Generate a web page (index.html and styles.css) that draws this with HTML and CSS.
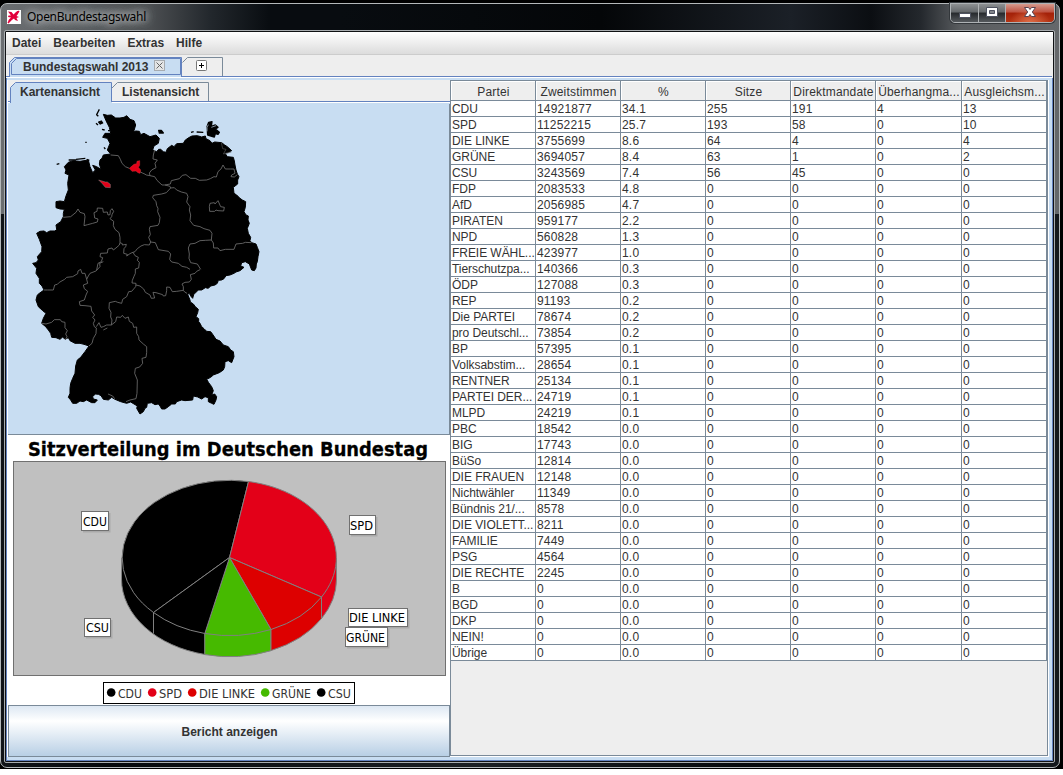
FILE: index.html
```html
<!DOCTYPE html>
<html lang="de">
<head>
<meta charset="utf-8">
<title>OpenBundestagswahl</title>
<link rel="stylesheet" href="styles.css">
</head>
<body>
<div class="desktop">
<div class="window">
  <header class="titlebar">
    <svg class="app-icon" width="14" height="14" viewBox="0 0 14 14"><rect width="14" height="14" fill="#fff"/><path d="M1 1.500l3.500.5 2 2.500 2.500-2.500 1.500-1 1.500 0-1 3-1.500 2 2.500 1-2.500 1 1.500 3-3-1-1-1.500-2.500 1.500-2 2-1.500-.5 1-2 2-2-3-.5.500-1.500 2.500 0z" fill="#e2003c"/><path d="M1 13L12 1" stroke="#e2003c" stroke-width="1.500"/></svg>
    <span class="title">OpenBundestagswahl</span>
    <div class="controls">
      <span class="ctl min"><svg width="14" height="14" viewBox="0 0 14 14"><rect x="1.500" y="7.500" width="11" height="4" fill="#fff" stroke="#4e5260"/></svg></span>
      <span class="ctl max"><svg width="14" height="14" viewBox="0 0 14 14"><path d="M1.500 1.500h11v9h-11z" fill="#fff" stroke="#4e5260"/><path d="M4.500 4.500h5v3h-5z" fill="#82858b" stroke="#4e5260"/></svg></span>
      <span class="ctl close"><svg width="14" height="14" viewBox="0 0 14 14"><path d="M1.500 1.500h4l1.500 2 1.500-2h4l-3.200 4.500 3.200 4.500h-4l-1.500-2-1.500 2h-4l3.200-4.500z" fill="#fff" stroke="#57434f"/></svg></span>
    </div>
  </header>
  <main class="client">
    <nav class="menubar"><span>Datei</span><span>Bearbeiten</span><span>Extras</span><span>Hilfe</span></nav>
    <div class="doc-tabs">
      <svg class="tab-shapes" width="1046" height="23"><path d="M3.500 22V7.500l5-5h167V22z" fill="#c8ddf2" stroke="#6382bf"/><path d="M5.500 19.500V8.500l5-5H174.500v16z" fill="none" stroke="#6382bf"/><path d="M176.500 7.500l5-5H216.500V21" fill="none" stroke="#7a8a99"/><path d="M0 21.500h3M175 21.500h871" stroke="#6382bf"/><path d="M4 21.500h171" stroke="#c8ddf2"/><path d="M0 22.500h1046" stroke="#fff"/></svg>
      <span class="doc-label">Bundestagswahl 2013</span>
      <svg class="tab-close" width="11" height="11"><rect x=".5" y=".5" width="10" height="10" fill="#e4e5e6" stroke="#a6abb0"/><path d="M2.500 2.500l6 6m0-6l-6 6" stroke="#666"/></svg>
      <svg class="tab-add" width="11" height="11"><rect x=".5" y=".5" width="10" height="10" rx="1" fill="#fff" stroke="#777"/><path d="M3 5.500h5M5.500 3v5" stroke="#000"/></svg>
    </div>
    <div class="content">
      <section class="left">
        <div class="view-tabs">
          <svg class="view-shapes" width="442" height="25"><path d="M2.500 24V8.500l5-5H103.500V24z" fill="#c8ddf2" stroke="#6382bf"/><path d="M103.500 9.500l6-6H200.500V22" fill="none" stroke="#7a8a99"/><path d="M0 22.500h2M104 22.500h338" stroke="#6382bf"/><path d="M0 23.500h2M104 23.500h338" stroke="#fff"/><path d="M3 23.500h101M0 24.500h442" stroke="#c8ddf2"/></svg>
          <span class="v1">Kartenansicht</span><span class="v2">Listenansicht</span>
        </div>
        <div class="map">
          <svg width="441" height="331" viewBox="8 103 441 331">
            <g transform="translate(20 100) scale(.33333)" stroke-linejoin="round">
              <path d="M250 43L262 46 274 45 287 54 300 54 312 52 320 47 330 58 342 62 347 75 342 92 335 96 348 93 358 94 362 104 372 100 390 110 408 105 418 115 415 130 402 138 398 150 410 155 416 148 422 148 430 155 438 157 442 146 455 136 462 140 470 131 490 130 496 120 508 112 516 108 532 107 545 111 556 108 558 116 570 122 576 130 584 126 605 128 614 135 622 140 635 152 622 158 614 158 622 170 640 172 643 183 645 195 648 210 652 222 657 230 653 240 653 252 640 262 642 280 650 285 660 295 667 300 677 305 676 322 672 335 678 345 685 348 684 360 688 370 682 385 685 400 692 412 690 422 695 428 708 432 712 442 717 455 714 470 712 485 709 492 708 504 703 512 695 510 688 492 676 485 665 488 662 498 672 502 660 512 648 516 642 520 630 525 618 527 612 536 605 540 595 541 592 550 585 555 572 558 565 565 556 563 545 570 535 570 525 580 521 584 518 595 512 588 508 580 503 583 510 600 511 606 520 612 526 620 535 628 533 638 528 650 536 656 536 665 540 670 545 680 552 686 560 694 572 695 578 703 588 718 600 723 610 735 625 740 632 750 640 755 642 770 635 788 625 782 615 785 614 800 610 810 598 818 580 825 572 832 560 838 566 848 575 860 580 872 575 885 584 882 590 890 588 900 582 913 575 910 565 905 565 893 555 890 545 897 533 891 520 888 518 900 495 902 485 900 470 905 466 912 455 912 445 920 435 927 425 927 420 918 415 912 405 914 395 908 382 910 380 922 375 925 370 935 360 942 350 925 352 918 342 912 332 906 320 910 302 905 285 898 275 892 265 900 250 898 243 887 235 883 226 882 218 890 220 897 232 900 225 908 215 908 200 900 190 905 180 903 170 910 158 910 152 900 145 892 150 880 150 865 152 850 158 835 165 820 167 798 172 780 182 772 195 755 207 738 192 733 180 730 165 730 150 722 145 713 135 718 128 711 120 718 108 713 95 712 92 700 85 690 77 680 65 670 70 655 78 640 68 632 55 620 48 600 52 585 58 580 72 570 66 558 58 550 58 535 48 520 50 505 38 490 48 488 55 480 52 470 65 455 66 440 58 418 50 400 60 394 72 393 80 398 90 393 105 393 110 388 108 375 122 365 130 350 130 340 133 328 120 327 108 323 108 305 120 303 133 305 138 288 145 270 143 250 147 225 135 220 138 210 133 200 145 187 160 182 180 184 205 180 210 200 218 218 226 210 218 196 230 200 243 208 238 192 240 180 246 175 250 165 272 162 262 150 270 130 262 115 248 112 255 100 272 100 268 82 258 62Z" stroke="#000" stroke-width="3"/>
              <g stroke="#000" stroke-width="4"><path d="M238 28l-4 8-4 8 5 5M228 70l6 5M198 125v4M146 180l22 0M168 178l28-3M110 193l8-2M252 142l4 5M200 178l8 3M246 88l8 2" fill="none"/><path d="M236 66l8-3 4 6-7 3zM264 92h6M416 91l8 0 6 8-12 0zM513 97l8-2M530 96l20 1"/><path d="M561 80l5-13 10-2-2 14 12-4 8 7-8 5 12 10-4 6-8-2-3 10-20-6z"/></g>
              <path d="M604 128l4 18 10 2-8 14 24-6" fill="none" stroke="#555" stroke-width="2"/>
              <path d="M561 94V82l4-8M574 82l14-5" fill="none" stroke="#c8ddf2" stroke-width="2"/>
              <g fill="none" stroke="#707070" stroke-width="2.500">
                <path d="M272 165L295 167 301 178 306 190 316 200 328 205M358 214L367 219 372 221 379 225 390 227 404 230 411 241 426 255 435 255 450 259M390 227L388 219 395 210 408 203 405 190 412 180 399 177 400 165 404 150"/>
                <path d="M435 255L451 252 454 242 478 236 487 226 498 224 512 235 526 235 538 241 560 240 571 236 582 230 589 231 594 215 603 207 609 195 616 207 631 207 642 207 645 220 635 225 633 230 643 231 652 224"/>
                <path d="M450 259L452 264 439 278 425 282 400 286 398 293 408 305 410 317 414 325 413 335 420 352 418 368 414 376 390 380 388 388 391 404 386 412 392 426 406 428 415 449 445 454 452 462 449 478 455 486 475 490 486 499 500 502 510 508"/>
                <path d="M452 264L463 263 470 270 484 276 500 280 504 290 500 306 510 320 508 330 512 345 510 362 521 376 540 380 552 386 570 391 576 400 574 420 556 421 540 422 525 430 510 432 505 444 508 462 507 475 512 488 532 492 542 508"/>
                <path d="M574 420L580 429 581 444 594 444 600 452 616 448 642 448 648 432 668 430 676 427 694 428M568 320L570 310 583 308 585 312 594 302 602 320 613 322 611 333 594 332 588 330 584 334 569 334Z"/>
                <path d="M130 352L152 350 168 337 174 327 180 337 193 341 195 350 192 377 203 374 218 370 232 366 234 357 224 354 222 338 231 334 232 324 248 325 250 337 262 336 264 345 270 344 271 332 276 326 281 334 276 344 275 350 270 356 281 364 280 377 285 388 297 398 300 412 300 428"/>
                <path d="M300 428L298 435 288 444 280 450 276 444 264 447 262 459 242 460 240 470 248 473 244 485 234 490 230 510M300 428L307 431 307 435 319 433 317 440 312 446 311 460 322 463 320 468 330 461 336 458 345 455 352 446 363 438 373 434 388 435 392 426M339 457L345 467 355 472 352 481 358 487 356 504 346 507 346 520 342 529 337 541 336 549 348 550 347 560 335 574 326 575 320 590 308 598 305 610 293 607 286 604 268 608 267 625 273 637 272 651 276 660 274 675"/>
                <path d="M250 485L239 490 240 500 228 513 210 520 205 528 200 538 203 550 190 555 193 566 203 574 198 585 193 600 178 605 180 616 195 617 213 619 215 633 224 645 218 652 225 660 220 670 223 680 229 684 228 701 220 715 216 730 207 738"/>
                <path d="M200 538L195 520 186 520 182 508 174 513 173 521 158 530 140 532 134 538 118 547 112 553 104 555 100 570 83 570 72 570M66 670L78 672 95 667 103 659 121 659 125 665 135 667 135 683 142 692 137 702 141 710 137 718"/>
                <path d="M229 680L237 668 243 682 250 680 260 675 274 675 287 665 290 651 302 652 307 646 315 655 325 651 328 664 338 670 341 682 350 681 350 700 356 710 357 720 370 732 380 740 380 758 378 772 366 775 368 790 359 801 346 805 344 820 352 840 351 880 348 896 330 900 318 905M348 555L360 558 371 567 376 577 390 585 394 595 404 594 399 577 408 578 428 584 430 588 437 587 440 572 440 561 450 562 457 575 470 574 490 571 494 576 501 580"/>
                <path d="M490 571L490 560 486 552 495 547 508 546 514 538 511 524 525 520 530 514 540 509M250 690L262 684M264 882L278 888 284 896"/>
              </g>
              <path d="M328 205l14-12 8-2 1-7 8-2 0 14-4 6 7 8-2 10-6-2-6-5-12 1z" fill="#e30018" stroke="#c33" stroke-width="1.500"/>
              <path d="M236 240l10 3 10 3 6 0 9 7 0 10-15-1-10-12z" fill="#e30018" stroke="#888" stroke-width="1.500"/>
            </g>
          </svg>
        </div>
        <div class="chart">
          <svg width="442" height="270" viewBox="8 435 442 270">
            <text class="chart-title" x="28" y="456" textLength="400" lengthAdjust="spacingAndGlyphs">Sitzverteilung im Deutschen Bundestag</text>
            <rect x="13.500" y="461.500" width="432" height="214" fill="#c0c0c0" stroke="#707070"/>
            <g stroke="#808080" stroke-linejoin="round">
              <path d="M121.500 558v21A107.500 77.500 0 0 0 205 654.500V633.500z" fill="#000"/>
              <path d="M204.800 633.500v21.100A107.500 77.500 0 0 0 271 650.700v-21.100z" fill="#46ba00"/>
              <path d="M271 629.500v21.100A107.500 77.500 0 0 0 321.500 618.500v-21.500z" fill="#dd0000"/>
              <path d="M321.500 597v21.500A107.500 77.500 0 0 0 336.500 579v-21z" fill="#e30018"/>
              <path d="M229.500 557.500L153.500 612.500A107.500 77.500 0 0 1 248.500 481.500z" fill="#000"/>
              <path d="M229.500 557.500L248.500 481.500A107.500 77.500 0 0 1 321.500 597z" fill="#e30018"/>
              <path d="M229.500 557.500L321.500 597A107.500 77.500 0 0 1 271 629.500z" fill="#dd0000"/>
              <path d="M229.500 557.500L271 629.500A107.500 77.500 0 0 1 204.800 633.500z" fill="#46ba00"/>
              <path d="M229.500 557.500L204.800 633.500A107.500 77.500 0 0 1 153.500 612.500z" fill="#000"/>
              <path d="M153.500 612.500v21" fill="none"/>
            </g>
            <g fill="#a9a9a9"><rect x="83" y="513" width="27.500" height="19.500"/><rect x="86" y="620" width="26.500" height="18.500"/><rect x="351" y="517" width="26.500" height="19.500"/><rect x="350" y="610" width="59.500" height="18.500"/><rect x="347" y="629" width="42.500" height="19.500"/></g>
            <g fill="#fff" stroke="#707070"><rect x="81.500" y="511.500" width="27" height="19"/><rect x="84.500" y="618.500" width="26" height="18"/><rect x="349.500" y="515.500" width="26" height="19"/><rect x="348.500" y="608.500" width="59" height="18"/><rect x="345.500" y="627.500" width="42" height="19"/></g>
            <g class="chart-text">
              <text x="83" y="526" textLength="24" lengthAdjust="spacingAndGlyphs">CDU</text><text x="86" y="632" textLength="23" lengthAdjust="spacingAndGlyphs">CSU</text><text x="350" y="530" textLength="23" lengthAdjust="spacingAndGlyphs">SPD</text><text x="349" y="622" textLength="56" lengthAdjust="spacingAndGlyphs">DIE LINKE</text><text x="346" y="642" textLength="39" lengthAdjust="spacingAndGlyphs">GRÜNE</text>
            </g>
            <rect x="103.500" y="682.500" width="251" height="21" fill="#fff" stroke="#000"/>
            <circle cx="111.200" cy="692.500" r="4.300"/><circle cx="152.200" cy="692.500" r="4.300" fill="#e30018"/><circle cx="192.200" cy="692.500" r="4.300" fill="#dd0000"/><circle cx="265.200" cy="692.500" r="4.300" fill="#46ba00"/><circle cx="321.200" cy="692.500" r="4.300"/>
            <g class="chart-text legend"><text x="118" y="698" textLength="24" lengthAdjust="spacingAndGlyphs">CDU</text><text x="159" y="698" textLength="23" lengthAdjust="spacingAndGlyphs">SPD</text><text x="199" y="698" textLength="56" lengthAdjust="spacingAndGlyphs">DIE LINKE</text><text x="272" y="698" textLength="39" lengthAdjust="spacingAndGlyphs">GRÜNE</text><text x="328" y="698" textLength="23" lengthAdjust="spacingAndGlyphs">CSU</text></g>
          </svg>
        </div>
        <button class="report">Bericht anzeigen</button>
      </section>
      <section class="right">
        <table class="results">
          <colgroup><col class="c85"><col class="c85"><col class="c85"><col class="c85"><col class="c85"><col class="c86"><col class="c85"></colgroup>
          <thead><tr><th>Partei</th><th>Zweitstimmen</th><th>%</th><th>Sitze</th><th>Direktmandate</th><th>Überhangma...</th><th>Ausgleichsm...</th></tr></thead>
          <tbody id="rows"></tbody>
        </table>
      </section>
    </div>
  </main>
</div>
</div>
<script src="table.js"></script>
</body>
</html>
```
FILE: styles.css
```css
* { box-sizing: border-box; }
body { margin: 0; background: #fff; font-family: "Liberation Sans", Arial, sans-serif; font-size: 12px; color: #333; overflow: hidden; }
svg { display: block; }
.desktop { width: 1063px; height: 769px; background: #000; padding: 3px 3px 1px 0; }
.window {
  height: 765px; border: 1px solid #b4b8ba; border-radius: 7px; padding: 0 4px 4px 3px;
  display: flex; flex-direction: column;
  background:
    linear-gradient(90deg, #6b6e71 0, #4b4e51 150px, #22272c 210px, #080c10 270px, #080c10 340px, #040608 600px, #1b2027 790px, #0b0e12 870px, #24282d 920px, #5a5d60 960px, #65686b 1060px) top / 100% 210px no-repeat,
    linear-gradient(90deg, #111418, #05080b 10%, #1b1f23 45%, #06090c 70%, #14181c);
}
.titlebar { height: 26px; display: flex; align-items: flex-start; padding-left: 3px; flex: none; }
.app-icon { margin-top: 6px; }
.title { margin: 4px 0 0 6px; font: 12px/18px "Noto Sans", "Open Sans", sans-serif; letter-spacing: -.3px; color: #000; text-shadow: 0 0 6px #b8babc, 0 0 8px #b8babc, 0 0 11px #a8abad, 0 0 14px #909396; width: 118px; white-space: nowrap; }
.controls { display: flex; margin: -1px 0 0 auto; border: 1px solid #aeb2b5; border-radius: 0 0 5px 5px; height: 20px; width: 105px; overflow: hidden; box-shadow: 0 0 0 1px #33373b; }
.ctl { display: flex; align-items: center; justify-content: center; height: 18px; background: linear-gradient(#8d9092, #63676a 45%, #26292c 50%, #55595d); border-right: 1px solid #b0b3b5; }
.min { width: 28px; }
.max { width: 27px; }
.close { width: 48px; border: 0; background: radial-gradient(ellipse at 50% 110%, #e0704a, transparent 60%), linear-gradient(#d59a8d, #bd5140 45%, #a32008 50%, #b53414); }
.client { flex: 1; min-height: 0; border: 1px solid #a8acaf; border-radius: 2px; box-shadow: inset 0 0 0 1px #101214; padding: 1px; display: flex; flex-direction: column; }
.menubar { box-sizing: content-box; height: 22px; flex: none; display: flex; gap: 12px; padding: 0 6px; background: linear-gradient(#fff, #dcdcdc); border-bottom: 1px solid #ccc; font-weight: bold; line-height: 23px; }
.doc-tabs { position: relative; height: 23px; flex: none; background: #eee; display: flex; font-weight: bold; line-height: 24px; overflow: hidden; }
.tab-shapes { position: absolute; left: 0; top: 0; }
.view-shapes { position: absolute; left: 0; top: -1px; }
.doc-label { position: relative; margin-left: 17px; width: 131px; white-space: nowrap; }
.tab-close { position: relative; margin-top: 5px; }
.tab-add { position: relative; margin: 5px 0 0 31px; }
.content { flex: 1; min-height: 0; background: #fff; border-left: 1px solid #6382bf; border-right: 1px solid #6382bf; border-bottom: 1px solid #6382bf; box-shadow: inset -3px -3px #c8ddf2, inset 0 2px #c8ddf2; padding: 1px 4px 3px 1px; display: flex; }
.left { width: 442px; display: flex; flex-direction: column; }
.view-tabs { position: relative; height: 24px; background: #eee; border-top: 1px solid #c8ddf2; display: flex; font-weight: bold; line-height: 24px; flex: none; }
.view-tabs span { position: relative; white-space: nowrap; }
.v1 { margin-left: 12px; width: 102px; }
.map { height: 332px; flex: none; background: #c8ddf2; border: solid #7a8a99; border-width: 0 1px 1px 0; }
.chart { height: 270px; flex: none; }
.chart svg { overflow: visible; }
.chart-title { font: bold 20px "DejaVu Sans", sans-serif; fill: #000; stroke: #000; stroke-width: .3px; }
.chart-text { font: 12px "DejaVu Sans", sans-serif; fill: #000; }
.legend { fill: #333; }
.report { height: 52px; flex: none; border: 1px solid #7a8a99; font: bold 12px "Liberation Sans", Arial, sans-serif; color: #333; background: linear-gradient(#dde8f3, #fff 30%, #b8cfe5); padding: 2px 0 0 1px; }
.right { width: 598px; margin-top: 1px; height: 676px; border: 1px solid #7a8a99; background: #eee; }
.results { width: 596px; table-layout: fixed; border-collapse: separate; border-spacing: 0; }
.c85 { width: 85px; }
.c86 { width: 86px; }
.results th { height: 20px; padding: 4px 0 0 1px; background: #eee; border-right: 1px solid #7a8a99; border-bottom: 1px solid #7a8a99; box-shadow: inset 1px 1px #fff; font-weight: normal; line-height: 15px; white-space: nowrap; letter-spacing: .18px; }
.results td { height: 16px; padding: 2px 0 0 1px; background: #fff; border-right: 1px solid #7a8a99; border-bottom: 1px solid #7a8a99; line-height: 13px; white-space: nowrap; letter-spacing: .2px; }
.results td:first-child { letter-spacing: -.05px; }
```
FILE: table.js
```js
const results = `CDU|14921877|34.1|255|191|4|13
SPD|11252215|25.7|193|58|0|10
DIE LINKE|3755699|8.6|64|4|0|4
GRÜNE|3694057|8.4|63|1|0|2
CSU|3243569|7.4|56|45|0|0
FDP|2083533|4.8
AfD|2056985|4.7
PIRATEN|959177|2.2
NPD|560828|1.3
FREIE WÄHL...|423977|1.0
Tierschutzpa...|140366|0.3
ÖDP|127088|0.3
REP|91193|0.2
Die PARTEI|78674|0.2
pro Deutschl...|73854|0.2
BP|57395|0.1
Volksabstim...|28654|0.1
RENTNER|25134|0.1
PARTEI DER...|24719|0.1
MLPD|24219|0.1
PBC|18542|0.0
BIG|17743|0.0
BüSo|12814|0.0
DIE FRAUEN|12148|0.0
Nichtwähler|11349|0.0
Bündnis 21/...|8578|0.0
DIE VIOLETT...|8211|0.0
FAMILIE|7449|0.0
PSG|4564|0.0
DIE RECHTE|2245|0.0
B|0|0.0
BGD|0|0.0
DKP|0|0.0
NEIN!|0|0.0
Übrige|0|0.0`;
const body = document.getElementById('rows');
for (const line of results.split('\n')) {
  const cells = line.split('|');
  while (cells.length < 7) cells.push('0');
  const row = body.insertRow();
  for (const value of cells) row.insertCell().textContent = value;
}
```
